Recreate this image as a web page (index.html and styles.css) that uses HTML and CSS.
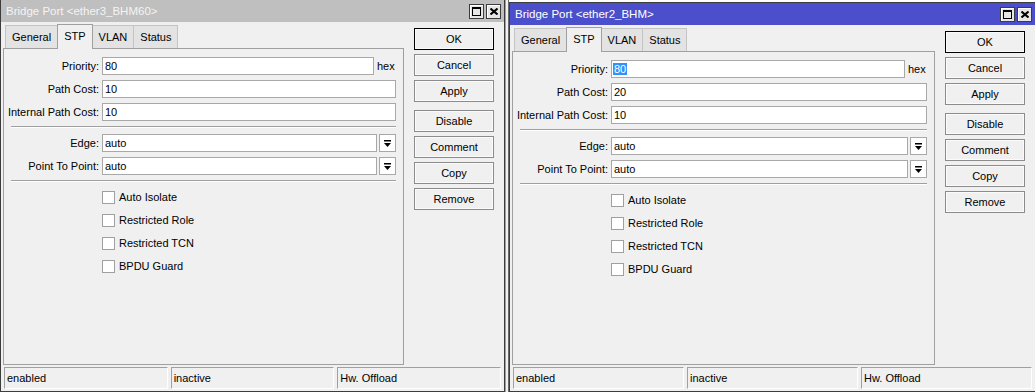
FILE: index.html
```html
<!DOCTYPE html>
<html lang="en">
<head>
    <meta charset="UTF-8">
    <title>Bridge Port</title>
    <link rel="stylesheet" href="styles.css">
</head>
<body>
    <div class="desktop">
        <!-- inactive window -->
        <div class="window win-left">
            <div class="titlebar">
                <span class="title">Bridge Port &lt;ether3_BHM60&gt;</span>
                <div class="title-buttons">
                    <span class="tbtn"><svg width="9" height="9" viewBox="0 0 9 9"><rect x="0.5" y="0.5" width="8" height="8" fill="none" stroke="#000"/><rect x="0" y="0" width="9" height="2"/></svg></span>
                    <span class="tbtn"><svg width="8" height="7" viewBox="0 0 8 7"><path d="M0.5 0.5 L7.5 6.5 M7.5 0.5 L0.5 6.5" stroke="#000" stroke-width="2"/></svg></span>
                </div>
            </div>
            <div class="win-body">
                <div class="main">
                    <div class="tabs">
                        <div class="tab">General</div>
                        <div class="tab active">STP</div>
                        <div class="tab">VLAN</div>
                        <div class="tab">Status</div>
                    </div>
                    <div class="panel">
                        <div class="row"><span class="label">Priority:</span><div class="input">80</div><span class="unit">hex</span></div>
                        <div class="row"><span class="label">Path Cost:</span><div class="input">10</div></div>
                        <div class="row"><span class="label">Internal Path Cost:</span><div class="input">10</div></div>
                        <div class="sep"></div>
                        <div class="row"><span class="label">Edge:</span><div class="input">auto</div><span class="dd"><svg width="7" height="7" viewBox="0 0 7 7"><rect x="0" y="0" width="7" height="1.5"/><polygon points="0,3 7,3 3.5,7"/></svg></span></div>
                        <div class="row"><span class="label">Point To Point:</span><div class="input">auto</div><span class="dd"><svg width="7" height="7" viewBox="0 0 7 7"><rect x="0" y="0" width="7" height="1.5"/><polygon points="0,3 7,3 3.5,7"/></svg></span></div>
                        <div class="sep"></div>
                        <div class="check"><span class="box"></span>Auto Isolate</div>
                        <div class="check"><span class="box"></span>Restricted Role</div>
                        <div class="check"><span class="box"></span>Restricted TCN</div>
                        <div class="check"><span class="box"></span>BPDU Guard</div>
                    </div>
                </div>
                <div class="buttons">
                    <div class="btn btn-default">OK</div>
                    <div class="btn">Cancel</div>
                    <div class="btn">Apply</div>
                    <div class="btn btn-group">Disable</div>
                    <div class="btn">Comment</div>
                    <div class="btn">Copy</div>
                    <div class="btn">Remove</div>
                </div>
            </div>
            <div class="statusbar">
                <div class="cell">enabled</div>
                <div class="cell">inactive</div>
                <div class="cell">Hw. Offload</div>
            </div>
        </div>

        <div class="behind"></div>

        <!-- active window -->
        <div class="window win-right">
            <div class="titlebar">
                <span class="title">Bridge Port &lt;ether2_BHM&gt;</span>
                <div class="title-buttons">
                    <span class="tbtn"><svg width="9" height="9" viewBox="0 0 9 9"><rect x="0.5" y="0.5" width="8" height="8" fill="none" stroke="#000"/><rect x="0" y="0" width="9" height="2"/></svg></span>
                    <span class="tbtn"><svg width="8" height="7" viewBox="0 0 8 7"><path d="M0.5 0.5 L7.5 6.5 M7.5 0.5 L0.5 6.5" stroke="#000" stroke-width="2"/></svg></span>
                </div>
            </div>
            <div class="win-body">
                <div class="main">
                    <div class="tabs">
                        <div class="tab">General</div>
                        <div class="tab active">STP</div>
                        <div class="tab">VLAN</div>
                        <div class="tab">Status</div>
                    </div>
                    <div class="panel">
                        <div class="row"><span class="label">Priority:</span><div class="input"><span class="selected">80</span></div><span class="unit">hex</span></div>
                        <div class="row"><span class="label">Path Cost:</span><div class="input">20</div></div>
                        <div class="row"><span class="label">Internal Path Cost:</span><div class="input">10</div></div>
                        <div class="sep"></div>
                        <div class="row"><span class="label">Edge:</span><div class="input">auto</div><span class="dd"><svg width="7" height="7" viewBox="0 0 7 7"><rect x="0" y="0" width="7" height="1.5"/><polygon points="0,3 7,3 3.5,7"/></svg></span></div>
                        <div class="row"><span class="label">Point To Point:</span><div class="input">auto</div><span class="dd"><svg width="7" height="7" viewBox="0 0 7 7"><rect x="0" y="0" width="7" height="1.5"/><polygon points="0,3 7,3 3.5,7"/></svg></span></div>
                        <div class="sep"></div>
                        <div class="check"><span class="box"></span>Auto Isolate</div>
                        <div class="check"><span class="box"></span>Restricted Role</div>
                        <div class="check"><span class="box"></span>Restricted TCN</div>
                        <div class="check"><span class="box"></span>BPDU Guard</div>
                    </div>
                </div>
                <div class="buttons">
                    <div class="btn btn-default">OK</div>
                    <div class="btn">Cancel</div>
                    <div class="btn">Apply</div>
                    <div class="btn btn-group">Disable</div>
                    <div class="btn">Comment</div>
                    <div class="btn">Copy</div>
                    <div class="btn">Remove</div>
                </div>
            </div>
            <div class="statusbar">
                <div class="cell">enabled</div>
                <div class="cell">inactive</div>
                <div class="cell">Hw. Offload</div>
            </div>
        </div>
    </div>
</body>
</html>
```

FILE: styles.css
```css
* { margin: 0; padding: 0; box-sizing: border-box; }
body { font-family: "Liberation Sans", Arial, sans-serif; font-size: 11px; color: #000; background: #fff; overflow: hidden; }
.desktop { display: flex; width: 1035px; height: 392px; overflow: hidden; }

.window { display: flex; flex-direction: column; flex: none; background: #f0f0f0; border: 1px solid #3c3c3c; padding-bottom: 2px; }
.win-left { width: 505px; height: 393px; margin-top: -1px; }
.win-right { width: 527px; height: 390px; margin-top: 2px; }
.behind { width: 4px; flex: none; background: #f0f0f0; border-left: 1px solid #a0a0a0; border-right: 1px solid #6a6a6a; }

.titlebar { height: 22px; flex: none; display: flex; align-items: center; justify-content: space-between; padding: 0 3px 0 5px; background: #bfbfbf; color: #f4f4f4; font-size: 11.5px; }
.win-right .titlebar { background: #4b4fcb; color: #fff; }
.title-buttons { display: flex; gap: 2px; }
.tbtn { width: 15px; height: 15px; display: flex; align-items: center; justify-content: center; background: #e6e6e6; border: 1px solid #3c3c3c; box-shadow: inset 1px 1px 0 #fff; }

.win-body { flex: 1; display: flex; padding: 2px 2px 0; min-height: 0; }
.main { flex: 1; display: flex; flex-direction: column; min-width: 0; }

.tabs { display: flex; align-items: flex-end; height: 24px; padding-left: 2px; }
.tab { height: 23px; padding: 0 6px; display: flex; align-items: center; background: #e3e3e3; border: 1px solid #c4c4c4; border-bottom: none; margin-right: -1px; }
.tab.active { height: 25px; margin-bottom: -1px; background: #f0f0f0; border-color: #a0a0a0; position: relative; z-index: 1; padding-bottom: 2px; }

.panel { flex: 1; border: 1px solid #a0a0a0; padding: 8px 7px 0 0; }
.row { display: flex; align-items: center; height: 18px; margin-bottom: 5px; }
.label { width: 95px; margin-right: 3px; text-align: right; white-space: nowrap; }
.input { flex: 1; height: 18px; line-height: 16px; padding-left: 2px; background: #fff; border: 1px solid #a8a8a8; white-space: nowrap; }
.selected { background: #3390ff; color: #fff; padding: 0 1px; margin-left: -1px; }
.unit { width: 22px; padding-left: 3px; }
.dd { width: 17px; height: 18px; margin-left: 2px; display: flex; align-items: center; justify-content: center; background: #fff; border: 1px solid #a8a8a8; }

.sep { height: 2px; border-top: 1px solid #a0a0a0; border-bottom: 1px solid #fff; margin: 1px 0 6px 7px; }
.check { display: flex; align-items: center; height: 18px; margin-bottom: 5px; padding-left: 98px; }
.box { width: 13px; height: 13px; margin-right: 4px; background: #fff; border: 1px solid #a0a0a0; }

.buttons { width: 80px; flex: none; margin: 4px 8px 0 10px; display: flex; flex-direction: column; gap: 4px; }
.btn { height: 22px; display: flex; align-items: center; justify-content: center; background: #f0f0f0; border: 1px solid #8c8c8c; box-shadow: inset 0 0 0 1px #fbfbfb; }
.btn-default { border-color: #000; }
.btn-group { margin-top: 4px; }

.statusbar { height: 22px; flex: none; display: flex; gap: 3px; margin: 2px 3px 0; }
.cell { flex: 1; display: flex; align-items: center; padding-left: 2px; border: 1px solid #a0a0a0; border-right-color: #fff; border-bottom-color: #fff; }
```
